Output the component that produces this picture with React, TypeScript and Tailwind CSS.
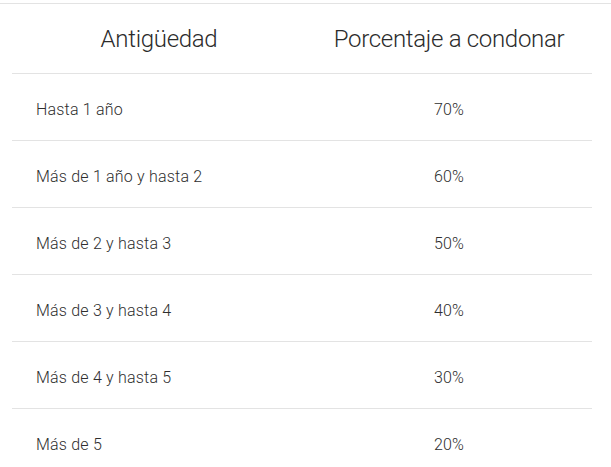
const rows = [
  { age: "Hasta 1 año", pct: "70%" },
  { age: "Más de 1 año y hasta 2", pct: "60%" },
  { age: "Más de 2 y hasta 3", pct: "50%" },
  { age: "Más de 3 y hasta 4", pct: "40%" },
  { age: "Más de 4 y hasta 5", pct: "30%" },
  { age: "Más de 5", pct: "20%" },
];

export default function App() {
  return (
    <div className="w-[611px] h-[467px] overflow-hidden bg-white font-['Roboto',sans-serif] text-[#333]">
      <div className="mt-[3px] border-t border-[#e3e3e3]">
        <div className="mx-[12px] w-[580px]">
          <div className="grid grid-cols-[294px_1fr] h-[70px] items-center border-b border-[#e3e3e3]">
            <div className="text-center text-[24px] font-light tracking-[-0.3px] text-[#2b2b2b]">Antigüedad</div>
            <div className="text-center text-[24px] font-light tracking-[-0.3px] text-[#2b2b2b]">Porcentaje a condonar</div>
          </div>
          {rows.map((r) => (
            <div
              key={r.age}
              className="grid grid-cols-[294px_1fr] h-[67px] items-center border-b border-[#e3e3e3] pt-[6px] text-[16px] font-light tracking-[0.2px] text-[#2e2e2e]"
            >
              <div className="pl-[24px]">{r.age}</div>
              <div className="text-center">{r.pct}</div>
            </div>
          ))}
        </div>
      </div>
    </div>
  );
}
